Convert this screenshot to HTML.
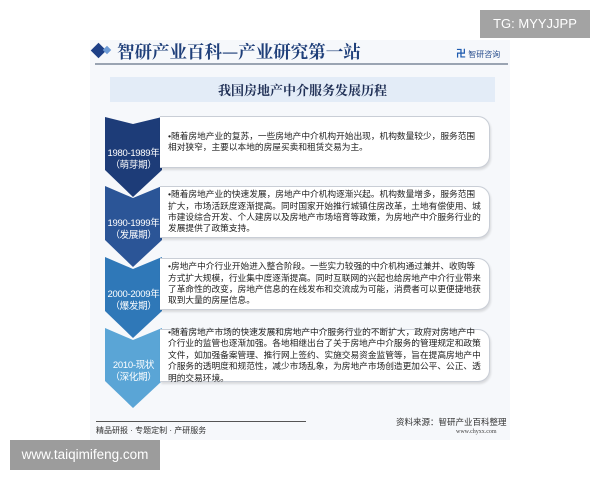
<!DOCTYPE html>
<html><head><meta charset="utf-8"><style>
body{margin:0;width:600px;height:480px;background:#fff;position:relative;overflow:hidden;font-family:"Liberation Sans","Noto Sans CJK SC",sans-serif;}
.card{position:absolute;left:90px;top:40px;width:420px;height:400px;background:#f6f8fb;}
.abs{position:absolute;}
.box{position:absolute;left:160px;width:330px;background:#fff;border:1px solid #c9ced6;border-left:none;border-radius:0 12px 12px 0;box-shadow:1px 2px 2px rgba(0,0,0,0.12);font-size:8.7px;line-height:11.4px;color:#222;padding:0 6px 0 8px;box-sizing:border-box;display:flex;align-items:center;}
.lab{position:absolute;left:103px;width:61px;text-align:center;color:#fff;font-size:9.5px;line-height:12px;letter-spacing:-0.3px;}
</style></head><body>
<div class="card"></div>
<div class="abs" style="left:93px;top:45px;width:11px;height:11px;background:#1d3f86;transform:rotate(45deg);"></div>
<div class="abs" style="left:104px;top:47px;width:6px;height:6px;background:#6d9bd6;transform:rotate(45deg);"></div>
<div class="abs" style="left:117px;top:39px;font-family:'Noto Serif CJK SC',serif;font-size:17.5px;font-weight:bold;color:#1f3f7a;">智研产业百科—产业研究第一站</div>
<div class="abs" style="left:456px;top:45px;font-size:8px;color:#2a4f8f;"><b style="color:#1e5bb0;font-size:10px;">卍</b> 智研咨询</div>
<div class="abs" style="left:95px;top:63px;width:413px;height:2px;background:#9aa4b2;"></div>
<div class="abs" style="left:110px;top:77px;width:385px;height:25px;background:#e3ecf7;text-align:center;line-height:25px;font-family:'Noto Serif CJK SC',serif;font-weight:bold;font-size:13px;color:#1f2f55;">我国房地产中介服务发展历程</div>
<svg class="abs" style="left:0;top:0" width="600" height="480">
<polygon points="105,117 133,124 162,117 162,170 133,197 105,170" fill="#1d3c78"/>
<polygon points="105,186 133,198 162,186 162,240 133,267 105,240" fill="#2b5597"/>
<polygon points="105,257 133,269 162,257 162,311 133,338 105,311" fill="#2f78b8"/>
<polygon points="105,328 133,340 162,328 162,381 133,408 105,381" fill="#5aa5d6"/>
</svg>
<div class="lab" style="top:148px;">1980-1989年<br>（萌芽期）</div>
<div class="lab" style="top:218px;">1990-1999年<br>（发展期）</div>
<div class="lab" style="top:289px;">2000-2009年<br>（爆发期）</div>
<div class="lab" style="top:360px;">2010-现状<br>（深化期）</div>
<div class="box" style="top:116px;height:52px;">•随着房地产业的复苏，一些房地产中介机构开始出现，机构数量较少，服务范围相对狭窄，主要以本地的房屋买卖和租赁交易为主。</div>
<div class="box" style="top:186px;height:52px;">•随着房地产业的快速发展，房地产中介机构逐渐兴起。机构数量增多，服务范围扩大，市场活跃度逐渐提高。同时国家开始推行城镇住房改革，土地有偿使用、城市建设综合开发、个人建房以及房地产市场培育等政策，为房地产中介服务行业的发展提供了政策支持。</div>
<div class="box" style="top:258px;height:52px;">•房地产中介行业开始进入整合阶段。一些实力较强的中介机构通过兼并、收购等方式扩大规模，行业集中度逐渐提高。同时互联网的兴起也给房地产中介行业带来了革命性的改变，房地产信息的在线发布和交流成为可能，消费者可以更便捷地获取到大量的房屋信息。</div>
<div class="box" style="top:329px;height:53px;">•随着房地产市场的快速发展和房地产中介服务行业的不断扩大，政府对房地产中介行业的监管也逐渐加强。各地相继出台了关于房地产中介服务的管理规定和政策文件，如加强备案管理、推行网上签约、实施交易资金监管等，旨在提高房地产中介服务的透明度和规范性，减少市场乱象，为房地产市场创造更加公平、公正、透明的交易环境。</div>
<div class="abs" style="left:96px;top:421px;width:210px;height:1px;background:#555;"></div>
<div class="abs" style="left:96px;top:425px;font-size:8px;color:#333;">精品研报 · 专题定制 · 产研服务</div>
<div class="abs" style="left:396px;top:416px;font-size:8.5px;color:#333;">资料来源：智研产业百科整理</div>
<div class="abs" style="left:456px;top:429px;font-size:6px;color:#444;font-family:'Liberation Serif',serif;">www.chyxx.com</div>
<div class="abs" style="left:480px;top:10px;width:110px;height:28px;background:#a3a3a3;color:#fff;font-size:13px;line-height:28px;text-align:center;">TG: MYYJJPP</div>
<div class="abs" style="left:10px;top:440px;width:150px;height:30px;background:#9c9c9c;color:#fff;font-size:13.5px;line-height:30px;text-align:center;">www.taiqimifeng.com</div>
</body></html>
